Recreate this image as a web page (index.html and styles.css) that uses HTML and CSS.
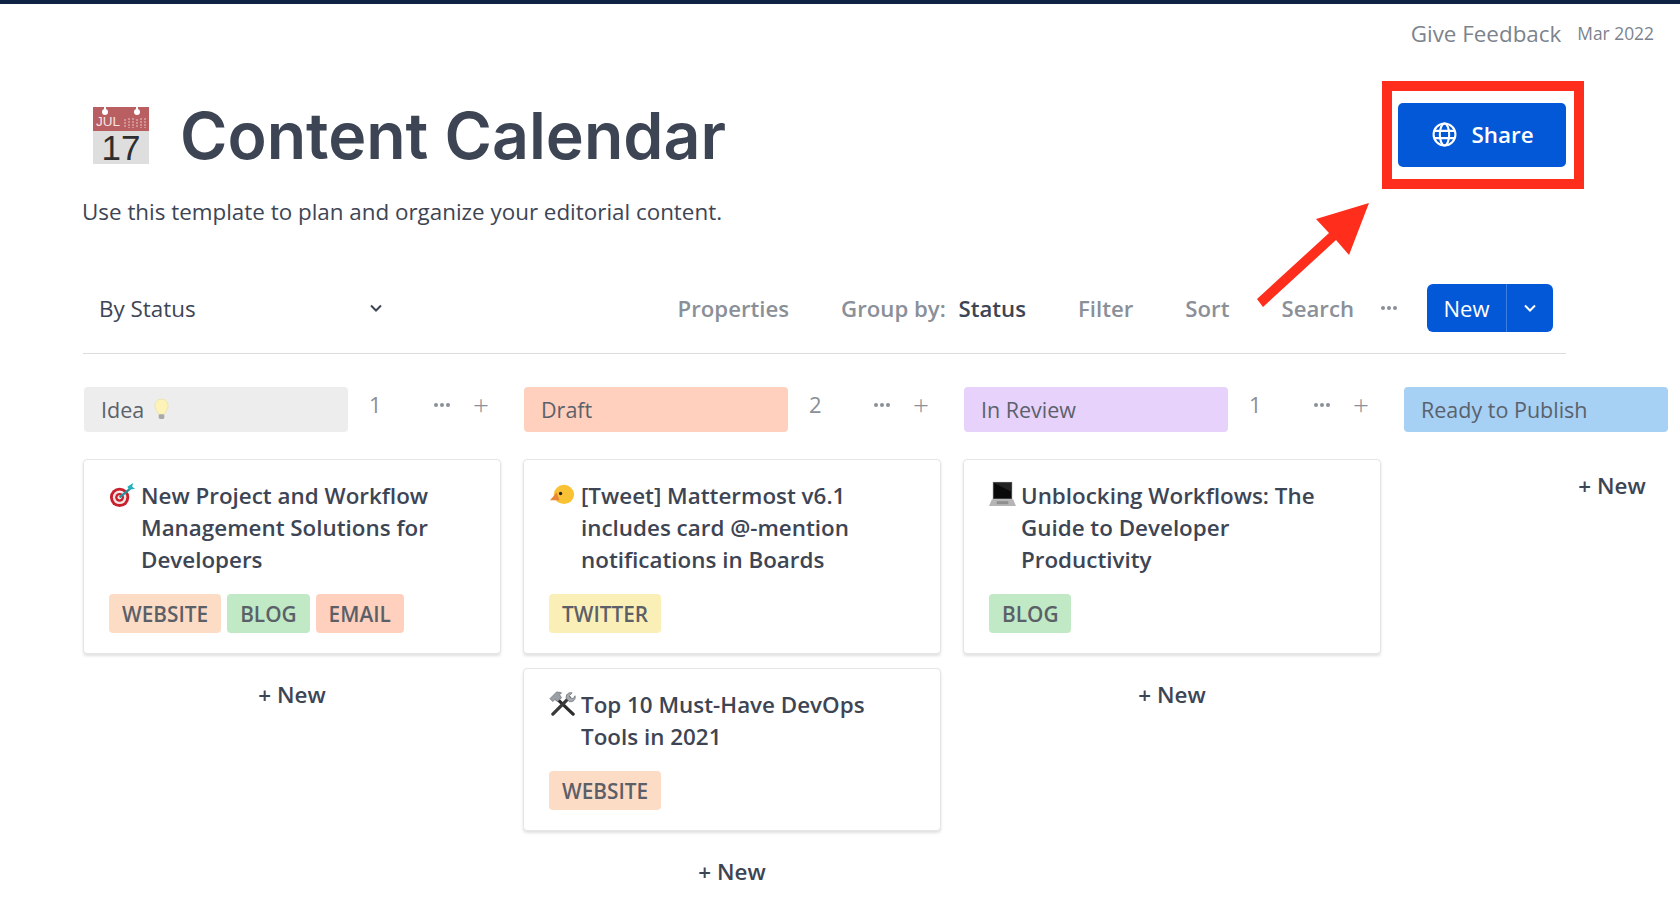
FILE: index.html
```html
<!DOCTYPE html>
<html lang="en">
<head>
    <meta charset="UTF-8">
    <meta name="viewport" content="width=device-width, initial-scale=1.0">
    <title>Content Calendar</title>
    <link rel="stylesheet" href="styles.css">
</head>
<body>
    <div class="topbar">
        <span class="feedback">Give Feedback</span>
        <span class="version">Mar 2022</span>
    </div>

    <div class="page">
        <header class="title-row">
            <div class="title-left">
                <svg class="cal-icon" viewBox="0 -4 56 64">
                    <rect x="0" y="0" width="56" height="57" fill="#dedede"/>
                    <rect x="0" y="0" width="56" height="24" fill="#b95f62"/>
                    <path d="M12 0v5M44 0v5" stroke="#fff" stroke-width="2"/>
                    <circle cx="12" cy="5" r="3" fill="#fff"/>
                    <circle cx="44" cy="5" r="3" fill="#fff"/>
                    <text x="3" y="18.5" class="cal-month">JUL</text>
                    <path d="M32 12v9M36 11v10M40 11v10M44 12v9M48 11v10M52 11v10" stroke="#d99ea0" stroke-width="1.6" stroke-dasharray="2 1"/>
                    <text x="28" y="52.5" class="cal-day">17</text>
                </svg>
                <h1>Content Calendar</h1>
            </div>
            <div class="share-wrap">
                <button class="share-btn">
                    <svg class="globe" viewBox="0 0 24 24" fill="none" stroke="#fff" stroke-width="2">
                        <circle cx="12" cy="12" r="10.5"/>
                        <ellipse cx="12" cy="12" rx="4.5" ry="10.5"/>
                        <path d="M2 8.5h20M2 15.5h20"/>
                    </svg>
                    Share
                </button>
            </div>
        </header>
        <p class="description">Use this template to plan and organize your editorial content.</p>

        <div class="toolbar">
            <div class="view-select">
                <span>By Status</span>
                <svg class="chevron" viewBox="0 0 14 14" fill="none" stroke="#3d4554" stroke-width="2"><path d="M2 4.5l5 5 5-5"/></svg>
            </div>
            <div class="tools">
                <span class="tool">Properties</span>
                <span class="tool">Group by: <b>Status</b></span>
                <span class="tool">Filter</span>
                <span class="tool">Sort</span>
                <span class="tool">Search</span>
                <span class="dots tool-dots"><i></i><i></i><i></i></span>
                <div class="new-btn">
                    <span class="new-label">New</span>
                    <span class="new-arrow">
                        <svg class="chevron" viewBox="0 0 14 14" fill="none" stroke="#fff" stroke-width="2"><path d="M2 4.5l5 5 5-5"/></svg>
                    </span>
                </div>
            </div>
        </div>

        <div class="board">
            <section class="column">
                <div class="col-head">
                    <div class="pill pill-idea">Idea
                        <svg class="bulb" viewBox="0 0 16 24">
                            <path d="M8 1C4 1 1 4 1 8c0 3 2 5 3 7l1 2h6l1-2c1-2 3-4 3-7 0-4-3-7-7-7z" fill="#fdf2b8" stroke="#efe3a8"/>
                            <rect x="5" y="17" width="6" height="5" rx="1.5" fill="#a9a9a9"/>
                        </svg>
                    </div>
                    <span class="count">1</span>
                    <span class="dots"><i></i><i></i><i></i></span>
                    <span class="plus">+</span>
                </div>
                <article class="card">
                    <div class="card-title">
                        <svg class="emoji" viewBox="0 0 28 28">
                            <circle cx="11" cy="18" r="10" fill="#c8202c"/>
                            <circle cx="11" cy="18" r="7" fill="#f4e6e6"/>
                            <circle cx="11" cy="18" r="4.6" fill="#c8202c"/>
                            <circle cx="11" cy="18" r="2.2" fill="#f4e6e6"/>
                            <path d="M11 18L22 9" stroke="#2a8f9c" stroke-width="2.4"/>
                            <path d="M19 7l2 3 6-1-3-2 1-4z" fill="#22b0bf"/>
                        </svg>
                        <span>New Project and Workflow Management Solutions for Developers</span>
                    </div>
                    <div class="tags">
                        <span class="tag tag-website">WEBSITE</span>
                        <span class="tag tag-blog">BLOG</span>
                        <span class="tag tag-email">EMAIL</span>
                    </div>
                </article>
                <div class="add-new">+ New</div>
            </section>

            <section class="column">
                <div class="col-head">
                    <div class="pill pill-draft">Draft</div>
                    <span class="count">2</span>
                    <span class="dots"><i></i><i></i><i></i></span>
                    <span class="plus">+</span>
                </div>
                <article class="card">
                    <div class="card-title">
                        <svg class="emoji" viewBox="0 0 28 28">
                            <ellipse cx="15.5" cy="15" rx="10.5" ry="10" fill="#f8c234"/>
                            <path d="M1 21l7-8 3 8z" fill="#e8873a"/>
                            <circle cx="12" cy="14" r="1.7" fill="#222"/>
                        </svg>
                        <span>[Tweet] Mattermost v6.1 includes card @-mention notifications in Boards</span>
                    </div>
                    <div class="tags">
                        <span class="tag tag-twitter">TWITTER</span>
                    </div>
                </article>
                <article class="card">
                    <div class="card-title">
                        <svg class="emoji" viewBox="0 0 28 28">
                            <path d="M7 9l18 17" stroke="#2b2b2b" stroke-width="3.4" stroke-linecap="round"/>
                            <path d="M1 10l7-7 5 1-2 2 2 3-4 4-3-2-2 2z" fill="#9aa0a6" stroke="#6e7378" stroke-width=".8"/>
                            <path d="M21 9L4 26" stroke="#3a3a3a" stroke-width="3.4" stroke-linecap="round"/>
                            <path d="M18 10c-1-4 2-7 6-6l-3 3 1 2 3 1 2-3c1 4-2 7-6 6z" fill="#a4aab0" stroke="#6e7378" stroke-width=".8"/>
                        </svg>
                        <span>Top 10 Must-Have DevOps Tools in 2021</span>
                    </div>
                    <div class="tags">
                        <span class="tag tag-website">WEBSITE</span>
                    </div>
                </article>
                <div class="add-new">+ New</div>
            </section>

            <section class="column">
                <div class="col-head">
                    <div class="pill pill-review">In Review</div>
                    <span class="count">1</span>
                    <span class="dots"><i></i><i></i><i></i></span>
                    <span class="plus">+</span>
                </div>
                <article class="card">
                    <div class="card-title">
                        <svg class="emoji" viewBox="0 0 28 28">
                            <path d="M4 2h20v18H4z" fill="#555"/>
                            <path d="M5 3h18v16H5z" fill="#0a0a0a"/>
                            <path d="M5 3h18v9z" fill="#222"/>
                            <path d="M3 20h22l3 7H0z" fill="#b5b5b5"/>
                            <path d="M8 22h12v3H8z" fill="#8f8f8f"/>
                        </svg>
                        <span>Unblocking Workflows: The Guide to Developer Productivity</span>
                    </div>
                    <div class="tags">
                        <span class="tag tag-blog">BLOG</span>
                    </div>
                </article>
                <div class="add-new">+ New</div>
            </section>

            <section class="column">
                <div class="col-head">
                    <div class="pill pill-ready">Ready to Publish</div>
                </div>
                <div class="add-new">+ New</div>
            </section>
        </div>
    </div>

    <svg class="arrow" viewBox="0 0 120 110">
        <path d="M1 100L73 34L60 20L113 4L93 56L80 41L7 108z" fill="#ff2d1b"/>
    </svg>
</body>
</html>
```
FILE: styles.css
```css
html, body {
    margin: 0;
    padding: 0;
    height: 100%;
    overflow: hidden;
}
body {
    font-family: "Open Sans", "Liberation Sans", sans-serif;
    background-color: #fff;
    color: #3d4554;
    border-top: 4px solid #0f2342;
    box-sizing: border-box;
    position: relative;
}
.topbar {
    display: flex;
    justify-content: flex-end;
    align-items: center;
    gap: 16px;
    box-sizing: border-box;
    height: 60px;
    padding: 0 26px 2px 0;
    color: #7d838d;
}
.feedback {
    font-size: 22.4px;
}
.version {
    font-size: 17.4px;
}
.page {
    padding: 0 0 0 83px;
    width: 1483px;
}
.title-row {
    display: flex;
    justify-content: space-between;
    align-items: center;
    height: 64px;
    margin-top: 39px;
}
.title-left {
    display: flex;
    align-items: center;
    gap: 31px;
    padding-left: 10px;
}
.cal-icon {
    width: 56px;
    height: 64px;
    flex: none;
}
.cal-month {
    font-family: "Liberation Sans", sans-serif;
    font-size: 13.5px;
    fill: #f5e3e3;
}
.cal-day {
    font-family: "Liberation Sans", sans-serif;
    font-size: 35px;
    fill: #2e2e2e;
    text-anchor: middle;
}
h1 {
    font-family: Inter, Lato, sans-serif;
    font-weight: 600;
    font-size: 64.4px;
    line-height: 64px;
    margin: 2px 0 0;
    color: #3d4554;
}
.share-wrap {
    position: relative;
}
.share-wrap::after {
    content: "";
    position: absolute;
    top: -22px;
    bottom: -22px;
    left: -16px;
    right: -18px;
    border: 10px solid #ff2d1b;
    pointer-events: none;
}
.share-btn {
    display: flex;
    align-items: center;
    justify-content: center;
    gap: 14px;
    box-sizing: border-box;
    width: 168px;
    height: 64px;
    padding: 0 0 2px 2px;
    border: 0;
    border-radius: 5px;
    background: #0358d7;
    color: #fff;
    font-family: "Open Sans", sans-serif;
    font-size: 22.4px;
    font-weight: 600;
}
.globe {
    width: 25px;
    height: 25px;
}
.description {
    font-size: 22.4px;
    line-height: 30px;
    margin: 30px 0 0 -1px;
    color: #3d4554;
}
.toolbar {
    display: flex;
    justify-content: space-between;
    align-items: center;
    height: 48px;
    margin-top: 57px;
    padding: 0 13px 21px 16px;
    border-bottom: 1px solid #dcdcdc;
}
.view-select {
    display: flex;
    align-items: center;
    justify-content: space-between;
    width: 284px;
    font-size: 22.4px;
}
.chevron {
    width: 14px;
    height: 14px;
}
.tools {
    display: flex;
    align-items: center;
    gap: 52px;
}
.tool {
    font-size: 22.2px;
    font-weight: 600;
    color: #8a8f98;
}
.tool b {
    font-weight: 600;
    color: #3d4554;
    margin-left: 7px;
}
.dots {
    display: inline-flex;
    gap: 2px;
}
.dots i {
    width: 4px;
    height: 4px;
    border-radius: 50%;
    background: #8a8f98;
}
.tool-dots {
    margin-left: -25px;
    margin-right: -22px;
}
.new-btn {
    display: flex;
    align-items: stretch;
    width: 126px;
    height: 48px;
    border-radius: 6px;
    background: #0358d7;
    color: #fff;
    font-size: 22px;
}
.new-label {
    flex: 1;
    display: flex;
    align-items: center;
    justify-content: center;
    border-right: 1px solid #3d7fe0;
}
.new-arrow {
    width: 46px;
    display: flex;
    align-items: center;
    justify-content: center;
}
.board {
    display: flex;
    gap: 22px;
    margin-top: 33px;
    width: 1700px;
}
.column {
    width: 418px;
    flex: none;
}
.col-head {
    display: flex;
    align-items: flex-start;
    height: 45px;
    margin-bottom: 27px;
    padding-left: 1px;
    color: #8a8f98;
}
.pill {
    display: flex;
    align-items: center;
    gap: 10px;
    box-sizing: border-box;
    width: 264px;
    height: 45px;
    padding: 0 17px;
    border-radius: 4px;
    font-size: 21.5px;
    font-weight: 500;
    color: #5b616b;
}
.pill-idea { background: #ededed; }
.pill-draft { background: #ffd0bd; }
.pill-review { background: #e7d2fb; }
.pill-ready { background: #a6d1f5; }
.bulb {
    width: 15px;
    height: 23px;
}
.count {
    width: 86px;
    padding-left: 21px;
    box-sizing: border-box;
    font-size: 22px;
    line-height: 34px;
}
.col-head .dots {
    margin-top: 16px;
    width: 39px;
}
.plus {
    font-size: 28px;
    font-weight: 300;
    line-height: 34px;
}
.card {
    box-sizing: border-box;
    width: 418px;
    padding: 20px 25px 20px;
    margin-bottom: 14px;
    background: #fff;
    border: 1px solid #e6e6e6;
    border-radius: 4px;
    box-shadow: 0 2px 3px rgba(0, 0, 0, 0.12);
}
.card-title {
    display: flex;
    align-items: flex-start;
    gap: 5px;
    font-size: 22.4px;
    font-weight: 600;
    line-height: 32px;
    color: #3d4554;
    margin-right: 28px;
}
.emoji {
    width: 27px;
    height: 27px;
    flex: none;
}
.tags {
    display: flex;
    gap: 6px;
    margin-top: 18px;
}
.tag {
    display: flex;
    align-items: center;
    height: 39px;
    padding: 0 13px;
    border-radius: 4px;
    font-size: 20.8px;
    font-weight: 600;
    color: #5b6068;
}
.tag-website { background: #fddcc6; }
.tag-blog { background: #c1e9c5; }
.tag-email { background: #ffd0bd; }
.tag-twitter { background: #fbefb8; }
.add-new {
    width: 418px;
    margin-top: 38px;
    text-align: center;
    font-size: 22.4px;
    font-weight: 600;
    line-height: 32px;
    color: #3d4554;
}
.card + .add-new {
    margin-top: 25px;
}
.arrow {
    position: absolute;
    left: 1256px;
    top: 195px;
    width: 120px;
    height: 110px;
}
```
